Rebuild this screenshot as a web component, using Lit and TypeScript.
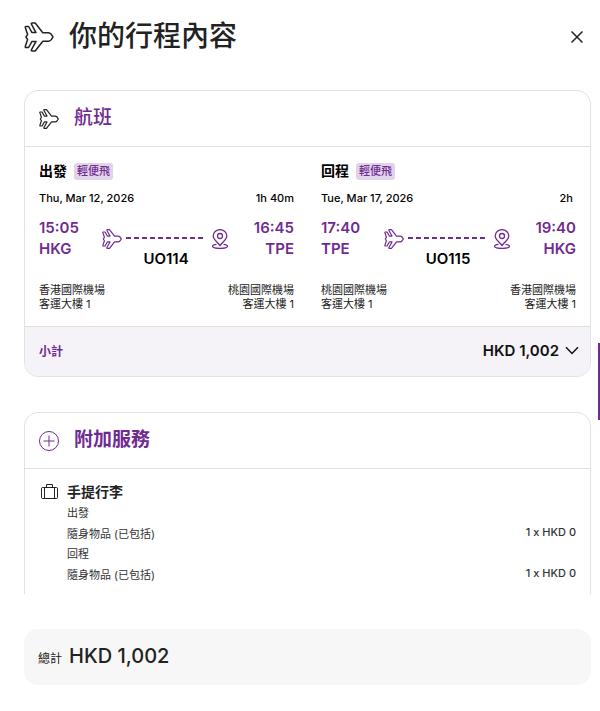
import { LitElement, html, css } from "lit";
import { customElement, property } from "lit/decorators.js";

const planeIcon = html`<svg class="icon" viewBox="0 0 30 30" fill="none" stroke="currentColor" stroke-linejoin="round" aria-hidden="true">
  <path d="M2 4.500H4.600L8 10.600H12L7.400 2.200Q6.800 1 8.200 1H11.200L18.800 10.800H24.600Q27 11 29 15Q27 19 24.600 19.200H18.800L11.200 29H8.200Q6.800 29 7.400 27.800L12 19.400H8L4.600 25.500H2Q1 25.500 1.300 24.500L3.600 17.600L2 15L3.600 12.400L1.300 5.500Q1 4.500 2 4.500Z"/>
</svg>`;

const pinIcon = html`<svg class="icon" viewBox="0 0 20 20" fill="none" stroke="currentColor" aria-hidden="true">
  <path d="M10 16.500C7 12.700 3.200 10.500 3.200 7A6.800 6.400 0 0 1 16.800 7C16.800 10.500 13 12.700 10 16.500Z"/>
  <circle cx="10" cy="7" r="2.500"/>
  <path d="M6.500 15.300C4 15.600 2.500 16.300 2.500 17.300C2.500 18.700 5.500 19.400 10 19.400S17.500 18.700 17.500 17.300C17.500 16.300 16 15.600 13.500 15.300"/>
</svg>`;

interface Flight {
  direction: string;
  fare: string;
  date: string;
  duration: string;
  departTime: string;
  departCode: string;
  departAirport: string;
  arriveTime: string;
  arriveCode: string;
  arriveAirport: string;
  terminal: string;
  number: string;
}

const flights: Flight[] = [
  {
    direction: "出發", fare: "輕便飛", date: "Thu, Mar 12, 2026", duration: "1h 40m",
    departTime: "15:05", departCode: "HKG", departAirport: "香港國際機場",
    arriveTime: "16:45", arriveCode: "TPE", arriveAirport: "桃園國際機場",
    terminal: "客運大樓 1", number: "UO114",
  },
  {
    direction: "回程", fare: "輕便飛", date: "Tue, Mar 17, 2026", duration: "2h",
    departTime: "17:40", departCode: "TPE", departAirport: "桃園國際機場",
    arriveTime: "19:40", arriveCode: "HKG", arriveAirport: "香港國際機場",
    terminal: "客運大樓 1", number: "UO115",
  },
];

const baggage = [
  { direction: "出發", item: "隨身物品 (已包括)", price: "1 x HKD 0" },
  { direction: "回程", item: "隨身物品 (已包括)", price: "1 x HKD 0" },
];

@customElement("flight-leg")
class FlightLeg extends LitElement {
  @property({ attribute: false }) flight!: Flight;

  static styles = css`
    :host { display: block; color: #000; }
    .head { display: flex; align-items: center; gap: 7px; height: 22px; }
    .direction { margin: 0; font-size: 14px; line-height: 20px; font-weight: 700; }
    .fare {
      padding: 0 3px; border-radius: 3px; background: #e1d3ea; color: #702b91;
      font-size: 11px; line-height: 17px; font-weight: 500;
    }
    .dates {
      display: flex; justify-content: space-between; margin-top: 8px;
      font-size: 11px; line-height: 16px; font-weight: 500;
    }
    .short { padding-right: 3px; }
    .route {
      display: grid; grid-template-columns: 40px 1fr 40px; margin-top: 11px; color: #702b91;
    }
    .stop { font-size: 15px; line-height: 21px; font-weight: 600; white-space: nowrap; }
    .end { text-align: right; }
    .arrive { justify-self: end; }
    .track {
      display: grid; grid-template-columns: 20px 1fr 20px; column-gap: 4px;
      align-items: center; align-content: start; margin: 12px 24px 0 23px;
    }
    .icon { display: block; width: 20px; height: 20px; stroke-width: 1.3; }
    .icon:first-child { stroke-width: 1.8; }
    .dash {
      height: 2px; margin-bottom: 2px;
      background: repeating-linear-gradient(90deg, #702b91 0 5px, transparent 5px 8px);
    }
    .number {
      grid-column: 1 / -1; justify-self: center; color: #000;
      font-size: 15px; line-height: 20px; font-weight: 600;
    }
    .airports {
      display: flex; justify-content: space-between; margin-top: 14px;
      color: #222; font-size: 11px; line-height: 14px;
    }
  `;

  render() {
    const f = this.flight;
    return html`
      <div class="head"><h3 class="direction">${f.direction}</h3><span class="fare">${f.fare}</span></div>
      <div class="dates"><span>${f.date}</span><span class=${f.duration.length < 4 ? "short" : ""}>${f.duration}</span></div>
      <div class="route">
        <div class="stop">${f.departTime}<br />${f.departCode}</div>
        <div class="track">${planeIcon}<span class="dash"></span>${pinIcon}<span class="number">${f.number}</span></div>
        <div class="stop end arrive">${f.arriveTime}<br />${f.arriveCode}</div>
      </div>
      <div class="airports">
        <div>${f.departAirport}<br />${f.terminal}</div>
        <div class="end">${f.arriveAirport}<br />${f.terminal}</div>
      </div>
    `;
  }
}

@customElement("app-root")
class AppRoot extends LitElement {
  static styles = css`
    :host {
      display: flex; flex-direction: column; box-sizing: border-box; height: 100vh;
      padding: 0 9px 26px 24px; background: #fff; color: #222;
      font-family: Inter, "Noto Sans CJK TC", sans-serif;
    }
    .top { display: flex; align-items: center; height: 74px; flex: none; }
    .title {
      flex: 1; margin: 0 0 2px 15px; font-size: 28px; line-height: 40px; font-weight: 500;
    }
    .icon { display: block; flex: none; width: 20px; height: 20px; stroke-width: 1.8; }
    .large { display: contents; }
    .large .icon { width: 30px; height: 30px; stroke-width: 1.5; }
    button { font: inherit; color: inherit; border: 0; background: none; padding: 0; cursor: pointer; }
    .close { width: 28px; height: 28px; display: grid; place-items: center; }
    .content {
      flex: 1; min-height: 0; overflow-y: auto; scrollbar-width: none; margin-top: 16px;
    }
    .card { border: 1px solid #e2e2e2; border-radius: 14px; overflow: hidden; }
    .card + .card { margin-top: 35px; }
    .heading {
      display: flex; align-items: center; gap: 15px; height: 55px; padding: 0 14px;
      border-bottom: 1px solid #e0e0e0;
    }
    .heading h2 {
      margin: 0 0 2px; color: #702b91; font-size: 19px; line-height: 28px; font-weight: 500;
    }
    .heading h2.strong { font-weight: 700; }
    .purple { color: #702b91; stroke-width: 1; }
    .legs {
      display: grid; grid-template-columns: 1fr 1fr; column-gap: 27px; padding: 13px 14px 15px;
    }
    .subtotal {
      display: flex; align-items: center; width: 100%; height: 50px; padding: 0 11px 2px 14px;
      border-top: 1px solid #e0e0e0; background: #f5f2f8; text-align: left;
    }
    .label { flex: 1; color: #702b91; font-size: 12px; font-weight: 700; }
    .amount { color: #111; font-size: 15px; font-weight: 600; }
    .chevron { display: block; margin-left: 6px; }
    .extras {
      display: grid; grid-template-columns: 20px 1fr; column-gap: 8px; padding: 12px 14px 60px;
    }
    .extras .icon { stroke-width: 1; margin-top: 1px; }
    .extras h3 { margin: 0; font-size: 14px; line-height: 22px; font-weight: 700; }
    .row {
      display: flex; justify-content: space-between; color: #333;
      font-size: 11px; line-height: 20px;
    }
    .row.way { line-height: 21px; }
    .price { font-weight: 500; line-height: 17px; }
    .total {
      flex: none; display: flex; align-items: center; gap: 7px; height: 56px;
      margin-top: 35px; padding: 0 14px; border-radius: 14px; background: #f7f7f7;
    }
    .total-label { font-size: 12px; }
    .total-amount { font-size: 20px; line-height: 28px; font-weight: 500; padding-bottom: 2px; }
    .side-tab { position: fixed; right: 0; top: 343px; width: 2px; height: 77px; background: #702b91; }
  `;

  render() {
    return html`
      <header class="top">
        <span class="large">${planeIcon}</span>
        <h1 class="title">你的行程內容</h1>
        <button class="close" aria-label="關閉">
          <svg width="12" height="12" viewBox="0 0 12 12" stroke="currentColor" stroke-width="1.5" aria-hidden="true">
            <path d="M.5.5 11.5 11.5M11.5.5.5 11.5" />
          </svg>
        </button>
      </header>
      <main class="content">
        <section class="card">
          <div class="heading">${planeIcon}<h2>航班</h2></div>
          <div class="legs">${flights.map((f) => html`<flight-leg .flight=${f}></flight-leg>`)}</div>
          <button class="subtotal" aria-expanded="false">
            <span class="label">小計</span>
            <span class="amount">HKD 1,002</span>
            <svg class="chevron" width="14" height="9" viewBox="0 0 14 9" fill="none" stroke="#111" stroke-width="1.5" aria-hidden="true">
              <path d="M1 1.200 7 7.500 13 1.200" />
            </svg>
          </button>
        </section>
        <section class="card">
          <div class="heading">
            <svg class="icon purple" viewBox="0 0 20 20" fill="none" stroke="currentColor" aria-hidden="true">
              <circle cx="10" cy="10" r="9.500" /><path d="M10 4.500V15.500M4.500 10H15.500" />
            </svg>
            <h2 class="strong">附加服務</h2>
          </div>
          <div class="extras">
            <svg class="icon" viewBox="0 0 20 20" fill="none" stroke="currentColor" aria-hidden="true">
              <rect x="2.500" y="5.500" width="16" height="11" rx="1" />
              <path d="M5.500 5.500V16.500M15.500 5.500V16.500M7.500 5.500V2.500H13.500V5.500" />
            </svg>
            <div>
              <h3>手提行李</h3>
              ${baggage.map((b) => html`
                <div class="row way">${b.direction}</div>
                <div class="row"><span>${b.item}</span><span class="price">${b.price}</span></div>
              `)}
            </div>
          </div>
        </section>
      </main>
      <footer class="total">
        <span class="total-label">總計</span><span class="total-amount">HKD 1,002</span>
      </footer>
      <button class="side-tab" aria-label="意見"></button>
    `;
  }
}
